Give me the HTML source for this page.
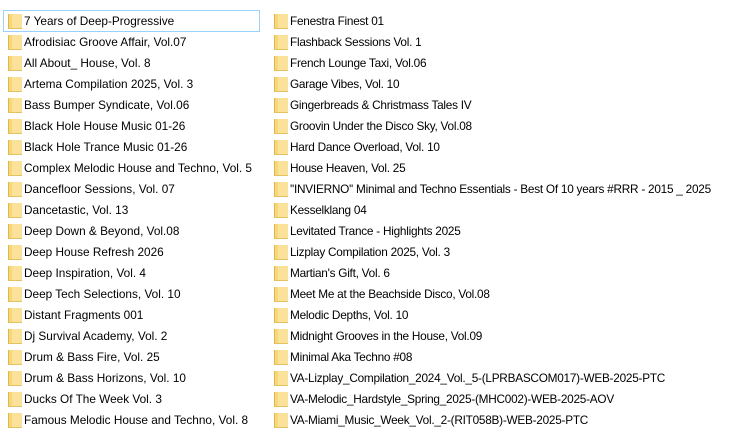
<!DOCTYPE html>
<html><head><style>
body{margin:0;width:738px;height:437px;background:#fff;font-family:"Liberation Sans",sans-serif;font-size:11.8px;color:#000;position:relative;overflow:hidden}
.c{position:absolute;top:11px}
.r{height:21px;line-height:21px;position:relative;white-space:nowrap}
.r i{position:absolute;left:5px;top:3px;width:13px;height:14px;background:#f6d77a;border-left:1px solid #e0b64c;border-bottom:1px solid #e6c160}
.r i:before{content:"";position:absolute;left:3px;top:0;right:0;bottom:0;background:#fbe29a}
.r span{position:absolute;left:21px}
.c2 span{letter-spacing:-0.25px}
.sel{position:absolute;left:3px;top:10px;width:255px;height:20px;border:1px solid #99d1ff}
</style></head><body>
<div class="sel"></div>
<div class="c" style="left:3px">
<div class="r"><i></i><span>7 Years of Deep-Progressive</span></div>
<div class="r"><i></i><span>Afrodisiac Groove Affair, Vol.07</span></div>
<div class="r"><i></i><span>All About_ House, Vol. 8</span></div>
<div class="r"><i></i><span>Artema Compilation 2025, Vol. 3</span></div>
<div class="r"><i></i><span>Bass Bumper Syndicate, Vol.06</span></div>
<div class="r"><i></i><span>Black Hole House Music 01-26</span></div>
<div class="r"><i></i><span>Black Hole Trance Music 01-26</span></div>
<div class="r"><i></i><span>Complex Melodic House and Techno, Vol. 5</span></div>
<div class="r"><i></i><span>Dancefloor Sessions, Vol. 07</span></div>
<div class="r"><i></i><span>Dancetastic, Vol. 13</span></div>
<div class="r"><i></i><span>Deep Down &amp; Beyond, Vol.08</span></div>
<div class="r"><i></i><span>Deep House Refresh 2026</span></div>
<div class="r"><i></i><span>Deep Inspiration, Vol. 4</span></div>
<div class="r"><i></i><span>Deep Tech Selections, Vol. 10</span></div>
<div class="r"><i></i><span>Distant Fragments 001</span></div>
<div class="r"><i></i><span>Dj Survival Academy, Vol. 2</span></div>
<div class="r"><i></i><span>Drum &amp; Bass Fire, Vol. 25</span></div>
<div class="r"><i></i><span>Drum &amp; Bass Horizons, Vol. 10</span></div>
<div class="r"><i></i><span>Ducks Of The Week Vol. 3</span></div>
<div class="r"><i></i><span>Famous Melodic House and Techno, Vol. 8</span></div>
</div>
<div class="c c2" style="left:269px">
<div class="r"><i></i><span>Fenestra Finest 01</span></div>
<div class="r"><i></i><span>Flashback Sessions Vol. 1</span></div>
<div class="r"><i></i><span>French Lounge Taxi, Vol.06</span></div>
<div class="r"><i></i><span>Garage Vibes, Vol. 10</span></div>
<div class="r"><i></i><span>Gingerbreads &amp; Christmass Tales IV</span></div>
<div class="r"><i></i><span>Groovin Under the Disco Sky, Vol.08</span></div>
<div class="r"><i></i><span>Hard Dance Overload, Vol. 10</span></div>
<div class="r"><i></i><span>House Heaven, Vol. 25</span></div>
<div class="r"><i></i><span>''INVIERNO'' Minimal and Techno Essentials - Best Of 10 years #RRR - 2015 _ 2025</span></div>
<div class="r"><i></i><span>Kesselklang 04</span></div>
<div class="r"><i></i><span>Levitated Trance - Highlights 2025</span></div>
<div class="r"><i></i><span>Lizplay Compilation 2025, Vol. 3</span></div>
<div class="r"><i></i><span>Martian's Gift, Vol. 6</span></div>
<div class="r"><i></i><span>Meet Me at the Beachside Disco, Vol.08</span></div>
<div class="r"><i></i><span>Melodic Depths, Vol. 10</span></div>
<div class="r"><i></i><span>Midnight Grooves in the House, Vol.09</span></div>
<div class="r"><i></i><span>Minimal Aka Techno #08</span></div>
<div class="r"><i></i><span>VA-Lizplay_Compilation_2024_Vol._5-(LPRBASCOM017)-WEB-2025-PTC</span></div>
<div class="r"><i></i><span>VA-Melodic_Hardstyle_Spring_2025-(MHC002)-WEB-2025-AOV</span></div>
<div class="r"><i></i><span>VA-Miami_Music_Week_Vol._2-(RIT058B)-WEB-2025-PTC</span></div>
</div>
</body></html>
